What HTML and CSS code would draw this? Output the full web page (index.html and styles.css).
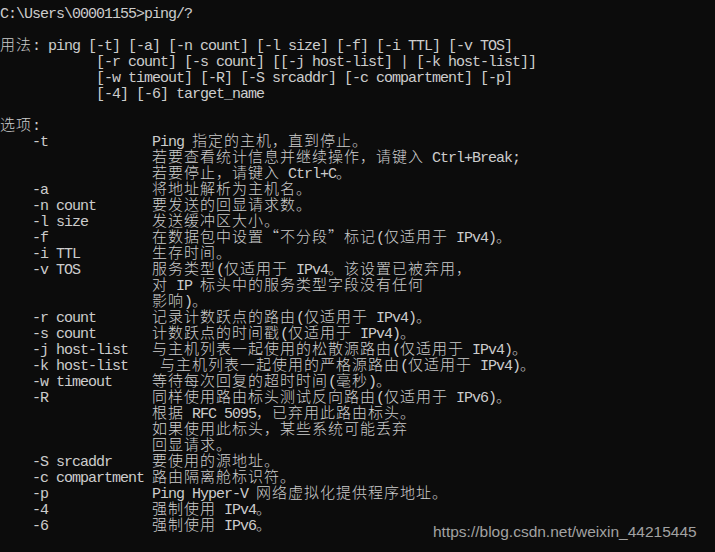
FILE: index.html
```html
<!DOCTYPE html>
<html lang="zh-CN">
<head>
<meta charset="utf-8">
<title>ping/?</title>
<link rel="stylesheet" href="styles.css">
</head>
<body>
<div class="console">
<div class="ln">C:\Users\00001155&gt;ping/?</div>
<div class="ln"></div>
<div class="ln"><span class="c">用法</span>: ping [-t] [-a] [-n count] [-l size] [-f] [-i TTL] [-v TOS]</div>
<div class="ln">            [-r count] [-s count] [[-j host-list] | [-k host-list]]</div>
<div class="ln">            [-w timeout] [-R] [-S srcaddr] [-c compartment] [-p]</div>
<div class="ln">            [-4] [-6] target_name</div>
<div class="ln"></div>
<div class="ln"><span class="c">选项</span>:</div>
<div class="ln">    -t             Ping <span class="c">指定的主机，直到停止。</span></div>
<div class="ln">                   <span class="c">若要查看统计信息并继续操作，请键入</span> Ctrl+Break;</div>
<div class="ln">                   <span class="c">若要停止，请键入</span> Ctrl+C<span class="c">。</span></div>
<div class="ln">    -a             <span class="c">将地址解析为主机名。</span></div>
<div class="ln">    -n count       <span class="c">要发送的回显请求数。</span></div>
<div class="ln">    -l size        <span class="c">发送缓冲区大小。</span></div>
<div class="ln">    -f             <span class="c">在数据包中设置“不分段”标记</span>(<span class="c">仅适用于</span> IPv4)<span class="c">。</span></div>
<div class="ln">    -i TTL         <span class="c">生存时间。</span></div>
<div class="ln">    -v TOS         <span class="c">服务类型</span>(<span class="c">仅适用于</span> IPv4<span class="c">。该设置已被弃用，</span></div>
<div class="ln">                   <span class="c">对</span> IP <span class="c">标头中的服务类型字段没有任何</span></div>
<div class="ln">                   <span class="c">影响</span>)<span class="c">。</span></div>
<div class="ln">    -r count       <span class="c">记录计数跃点的路由</span>(<span class="c">仅适用于</span> IPv4)<span class="c">。</span></div>
<div class="ln">    -s count       <span class="c">计数跃点的时间戳</span>(<span class="c">仅适用于</span> IPv4)<span class="c">。</span></div>
<div class="ln">    -j host-list   <span class="c">与主机列表一起使用的松散源路由</span>(<span class="c">仅适用于</span> IPv4)<span class="c">。</span></div>
<div class="ln">    -k host-list    <span class="c">与主机列表一起使用的严格源路由</span>(<span class="c">仅适用于</span> IPv4)<span class="c">。</span></div>
<div class="ln">    -w timeout     <span class="c">等待每次回复的超时时间</span>(<span class="c">毫秒</span>)<span class="c">。</span></div>
<div class="ln">    -R             <span class="c">同样使用路由标头测试反向路由</span>(<span class="c">仅适用于</span> IPv6)<span class="c">。</span></div>
<div class="ln">                   <span class="c">根据</span> RFC 5095<span class="c">，已弃用此路由标头。</span></div>
<div class="ln">                   <span class="c">如果使用此标头，某些系统可能丢弃</span></div>
<div class="ln">                   <span class="c">回显请求。</span></div>
<div class="ln">    -S srcaddr     <span class="c">要使用的源地址。</span></div>
<div class="ln">    -c compartment <span class="c">路由隔离舱标识符。</span></div>
<div class="ln">    -p             Ping Hyper-V <span class="c">网络虚拟化提供程序地址。</span></div>
<div class="ln">    -4             <span class="c">强制使用</span> IPv4<span class="c">。</span></div>
<div class="ln">    -6             <span class="c">强制使用</span> IPv6<span class="c">。</span></div>
<div class="watermark">https://blog.csdn.net/weixin_44215445</div>
</div>
</body>
</html>
```
FILE: styles.css
```css
html, body {
  margin: 0;
  padding: 0;
  background: #0c0c0c;
}

.console {
  position: relative;
  width: 715px;
  height: 552px;
  box-sizing: border-box;
  padding-top: 7px;
  background: #0c0c0c;
  color: #cccccc;
  font-family: "Liberation Mono", "DejaVu Sans Mono", monospace;
  font-size: 15px;
  letter-spacing: -1px;
  overflow: hidden;
}

.ln {
  height: 16px;
  line-height: 16px;
  white-space: pre;
}

.c {
  font-family: "Noto Sans CJK SC", sans-serif;
  font-size: 15px;
  font-weight: 300;
  letter-spacing: 1px;
  line-height: 8px;
}

.watermark {
  position: absolute;
  left: 433px;
  top: 523px;
  font-family: "Liberation Sans", Arial, sans-serif;
  font-size: 15.5px;
  letter-spacing: 0;
  line-height: 18px;
  color: #a2a2a2;
  white-space: nowrap;
}
```
